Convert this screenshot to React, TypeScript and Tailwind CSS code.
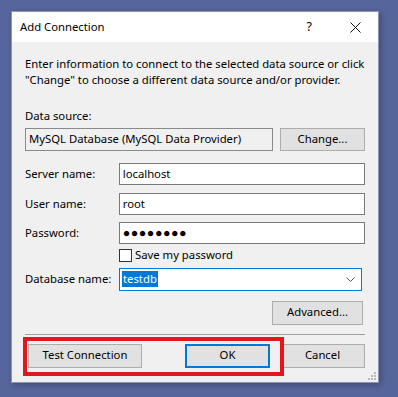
import * as React from "react";

const font = { fontFamily: '"Noto Sans", "Open Sans", sans-serif' };

const Btn = ({
  label,
  w,
  primary,
}: {
  label: string;
  w: string;
  primary?: boolean;
}) => (
  <div
    className={`${w} h-[24px] flex items-center justify-center bg-[#e1e1e1] text-[11.3px] text-black ${
      primary ? "border-2 border-[#0078d7]" : "border border-[#adadad]"
    }`}
  >
    {label}
  </div>
);

const Field = ({ label, value, mt }: { label: string; value: React.ReactNode; mt: string }) => (
  <div className={`flex items-center ${mt}`}>
    <div className="w-[94px] text-[11.3px] text-black">{label}</div>
    <div className="w-[247px] h-[22px] bg-white border border-[#7a7a7a] flex items-center pl-[3px] text-[11.3px] text-black">
      {value}
    </div>
  </div>
);

export default function App() {
  return (
    <div className="min-h-[397px] w-[398px] bg-[#56659b] pt-[11px] pl-[11px]" style={font}>
      <div className="relative w-[368px] h-[372px] bg-[#f0f0f0] border border-[#8d95b5] shadow-[2px_2px_6px_rgba(0,0,0,0.25)]">
        {/* title bar */}
        <div className="h-[30px] bg-white flex items-center pl-[8px] text-[11.3px] text-black">
          <span>Add Connection</span>
          <span className="ml-auto mr-[38px] text-[12.5px]">?</span>
          <svg width="11" height="11" viewBox="0 0 11 11" className="mr-[17px]">
            <path d="M0.5 0.5 L10.5 10.5 M10.5 0.5 L0.5 10.5" stroke="#111" strokeWidth="1" />
          </svg>
        </div>

        <div className="px-[13px]">
          <p className="mt-[14px] text-[11.3px] leading-[16px] text-black whitespace-nowrap">
            Enter information to connect to the selected data source or click
            <br />
            "Change" to choose a different data source and/or provider.
          </p>

          <div className="mt-[20px] text-[11.3px] leading-[16px] text-black">Data source:</div>
          <div className="flex mt-[4px]">
            <div className="w-[248px] h-[23px] bg-[#f0f0f0] border border-[#8a8a8a] flex items-center pl-[3px] text-[11.3px] text-black">
              MySQL Database (MySQL Data Provider)
            </div>
            <div className="ml-[7px]">
              <div className="w-[85px] h-[23px] flex items-center justify-center bg-[#e1e1e1] border border-[#adadad] text-[11.3px]">
                Change...
              </div>
            </div>
          </div>

          <Field label="Server name:" value="localhost" mt="mt-[12px]" />
          <Field label="User name:" value="root" mt="mt-[8px]" />
          <Field
            label="Password:"
            value={<span className="tracking-[0.5px] text-[12.5px] font-bold">●●●●●●●●</span>}
            mt="mt-[7px]"
          />

          <div className="flex items-center mt-[3px] ml-[94px]">
            <div className="w-[13px] h-[13px] bg-white border border-[#333]" />
            <span className="ml-[3px] text-[11.3px] text-black">Save my password</span>
          </div>

          <div className="flex items-center mt-[4px]">
            <div className="w-[94px] text-[11.3px] text-black">Database name:</div>
            <div className="w-[243px] h-[23px] bg-white border border-[#0078d7] flex items-center pl-[2px] text-[11.3px]">
              <span className="bg-[#0078d7] text-white px-[1px] leading-[16px]">testdb</span>
              <svg width="9" height="5" viewBox="0 0 9 5" className="ml-auto mr-[6px]">
                <path d="M0.5 0.5 L4.5 4.5 L8.5 0.5" stroke="#555" strokeWidth="1" fill="none" />
              </svg>
            </div>
          </div>

          <div className="flex justify-end mt-[10px] pr-[2px]">
            <Btn label="Advanced..." w="w-[91px]" />
          </div>

          <div className="mt-[9px] h-px bg-[#a0a0a0]" />

          <div className="flex mt-[9px] pl-[3px]">
            <Btn label="Test Connection" w="w-[114px]" />
            <div className="ml-[43px]">
              <Btn label="OK" w="w-[85px]" primary />
            </div>
            <div className="ml-[10px]">
              <Btn label="Cancel" w="w-[85px]" />
            </div>
          </div>
        </div>

        {/* annotation box */}
        <div className="absolute left-[11px] top-[325px] w-[261px] h-[39px] border-[4px] border-[#e3161f]" />

        {/* resize grip */}
        <svg width="10" height="10" viewBox="0 0 10 10" className="absolute right-[2px] bottom-[2px]">
          {[
            [8, 2],
            [8, 5],
            [5, 5],
            [8, 8],
            [5, 8],
            [2, 8],
          ].map(([x, y], i) => (
            <rect key={i} x={x} y={y} width="2" height="2" fill="#b8b8b8" />
          ))}
        </svg>
      </div>
    </div>
  );
}
